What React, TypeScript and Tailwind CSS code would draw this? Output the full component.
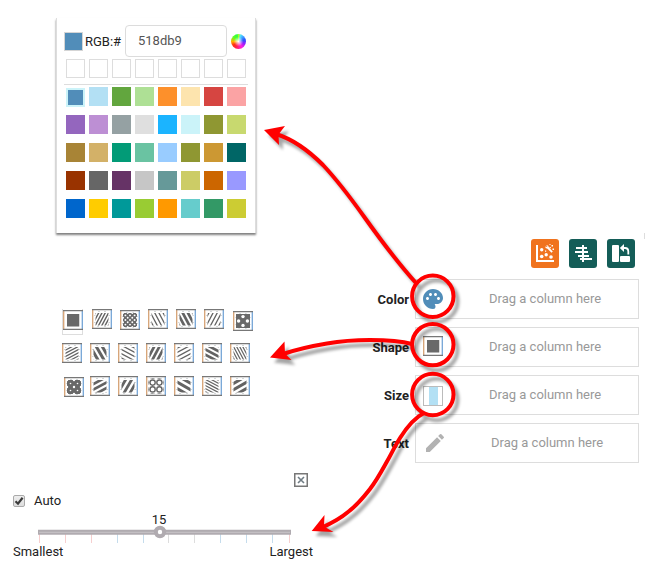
import React from 'react';
import { MdPalette, MdEdit } from 'react-icons/md';

const swatches = [
  ['#518db9', '#b3e0f4', '#62a63e', '#aee095', '#fd902b', '#fde4ae', '#d64541', '#fba3a4'],
  ['#9466be', '#bd8fd4', '#95a1a3', '#dfdfdf', '#1bb4ff', '#cbf3f9', '#8f9732', '#c8d96f'],
  ['#a88436', '#d3b168', '#029b77', '#6ac3a2', '#99ccff', '#8f9732', '#cc9833', '#006666'],
  ['#993300', '#666666', '#663366', '#c6c6c6', '#669999', '#cccc66', '#cc6600', '#9999ff'],
  ['#0066cc', '#ffcc00', '#009999', '#99cc33', '#ff9900', '#66cccc', '#339966', '#cccc33'],
];

type Tile =
  | { kind: 'solid' }
  | { kind: 'lines'; angle: number; width: number; step: number }
  | { kind: 'dots'; radius: number; step: number; ring?: boolean; center?: number; shift?: number };

const lines = (angle: number, width: number, step: number): Tile => ({ kind: 'lines', angle, width, step });

const tileRows: Tile[][] = [
  [
    { kind: 'solid' },
    lines(28, 1.4, 2.9),
    { kind: 'dots', radius: 0.95, step: 4.6, center: 0.95 },
    lines(-28, 1.3, 3.7),
    lines(-28, 2.7, 4.6),
    lines(28, 1.3, 3.7),
    { kind: 'dots', radius: 1.7, step: 8.8, center: 1.7, shift: 4.4 },
  ],
  [
    lines(62, 1.3, 2.8),
    lines(-30, 3, 5.2),
    lines(-62, 1.3, 3.7),
    lines(28, 2.7, 4.6),
    lines(62, 1.3, 3.7),
    lines(-62, 2.7, 4.6),
    lines(-28, 1.2, 2.7),
  ],
  [
    { kind: 'dots', radius: 0.8, step: 7, center: 1.2 },
    lines(62, 2.7, 4.9),
    lines(30, 2.8, 5.2),
    { kind: 'dots', radius: 2.6, step: 6.8, ring: true },
    lines(-60, 3, 5.6),
    lines(-62, 1.2, 2.7),
    lines(60, 3, 5.4),
  ],
];

function PatternTile({ tile, id }: { tile: Tile; id: string }) {
  const offsets = [-5, -4, -3, -2, -1, 0, 1, 2, 3, 4, 5];
  const full = tile.kind === 'dots';
  return (
    <svg width="20" height="20" viewBox="0 0 20 20" className="block">
      <defs>
        <clipPath id={id}>
          {full ? <rect x="2.5" y="2.5" width="15" height="15" /> : <rect x="3.5" y="4" width="13" height="12.5" />}
        </clipPath>
      </defs>
      <path d="M.7 0V20" stroke="#d6a274" strokeWidth="1.3" />
      <path d="M19.3 0V20" stroke="#74a5d6" strokeWidth="1.3" />
      <path d="M0 .7H20M0 19.3H20" stroke="#777" strokeWidth="1.3" />
      {tile.kind !== 'solid' && (
        <path d="M2 6.5h1.5M2 13.5h1.5M16.5 6.5H18M16.5 13.5H18M5 17.5h2M12 17.5h2M6 2.5h2M12 2.5h2" stroke="#d5d9da" />
      )}
      <g clipPath={`url(#${id})`}>
        {tile.kind === 'solid' && <rect x="4" y="4" width="12.5" height="13" fill="#696969" />}
        {tile.kind === 'lines' && (
          <g transform={`rotate(${tile.angle} 10 10)`} stroke="#636363" strokeWidth={tile.width}>
            {offsets.map((n) => (
              <path key={n} d={`M${10 + n * tile.step} -5V25`} />
            ))}
          </g>
        )}
        {tile.kind === 'dots' && (
          <g>
            {!tile.ring && <rect x="3" y="3" width="14" height="14" fill="#696969" />}
            {[-2, -1, 0, 1].flatMap((r) =>
              [-2, -1, 0, 1].map((c) => (
                <circle
                  key={`${r}${c}`}
                  cx={10 + (tile.shift ?? 0) + (c + 0.5) * tile.step}
                  cy={10 + (r + 0.5) * tile.step}
                  r={tile.radius}
                  fill={tile.ring ? 'none' : '#fff'}
                  stroke={tile.ring ? '#666' : 'none'}
                  strokeWidth="1.4"
                />
              )),
            )}
            {tile.center &&
              [-1, 0, 1].flatMap((r) =>
                [-1, 0, 1].map((c) => (
                  <circle
                    key={`m${r}${c}`}
                    cx={10 + (tile.shift ?? 0) + c * tile.step}
                    cy={10 + r * tile.step}
                    r={tile.center}
                    fill="#fff"
                  />
                )),
              )}
          </g>
        )}
      </g>
    </svg>
  );
}

function ColorPicker() {
  return (
    <section className="ml-14 h-[215px] w-[200px] border-x border-[#ddd] bg-white px-[7px] pt-[7px] shadow-[0_2px_2px_rgba(0,0,0,0.5)]">
      <div className="flex h-8 items-center">
        <span className="size-[19px] border border-[#d5d5d5] bg-[#518db9]" />
        <span className="ml-[2px] w-10 whitespace-nowrap pt-px text-[13px] text-[#222]">RGB:#</span>
        <span className="flex h-8 w-[102px] items-center rounded border border-[#dcdcdc] pl-3 text-[13px] text-[#555]">
          518db9
        </span>
        <span className="ml-1 size-[15px] rounded-full bg-[radial-gradient(circle,#fff_0%,transparent_45%),conic-gradient(#aaff20_0deg,#50e0ff_20deg,#2850ff_75deg,#9020ff_110deg,#ff20e0_150deg,#ff2050_200deg,#ff3010_235deg,#ffb000_270deg,#60ff20_310deg,#30ff40_345deg,#50ff60_360deg)]" />
      </div>
      <div className="mt-[2px] flex gap-1 border-b border-[#ddd] px-[2px] pb-[6px]">
        {swatches[0].map((c) => (
          <span key={c} className="size-[19px] border border-[#ddd]" />
        ))}
      </div>
      <div className="mt-[2px] flex flex-col gap-[9px] px-[2px]">
        {swatches.map((row, r) => (
          <div key={r} className="flex h-[19px] gap-1">
            {row.map((c, i) => (
              <span
                key={i}
                className={r === 0 && i === 0 ? 'mt-px size-[19px] border-2 border-[#cbf3f9]' : 'size-[19px]'}
                style={{ backgroundColor: c }}
              />
            ))}
          </div>
        ))}
      </div>
    </section>
  );
}

function ShapePicker() {
  return (
    <section className="mt-[76px] ml-[62px] flex flex-col">
      <div className="flex h-[34px] gap-2">
        {tileRows[0].map((t, i) => (
          <div
            key={i}
            className={
              i === 0
                ? 'mr-px h-[26px] w-[21px] border-x border-b border-[#ddd] pt-px'
                : i === 2
                  ? 'pt-px'
                  : i === 6
                    ? 'ml-px pt-[2px]'
                    : ''
            }
          >
            <PatternTile tile={t} id={`a${i}`} />
          </div>
        ))}
      </div>
      <div className="flex h-[33px] gap-2">
        {tileRows[1].map((t, i) => (
          <PatternTile key={i} tile={t} id={`b${i}`} />
        ))}
      </div>
      <div className="flex gap-2">
        {tileRows[2].map((t, i) => (
          <div key={i} className={i === 0 ? '-mr-[2px] ml-[2px] h-5 pt-px' : 'h-5'}>
            <PatternTile tile={t} id={`c${i}`} />
          </div>
        ))}
      </div>
    </section>
  );
}

const ticks = [39, 65, 91, 117, 143, 168, 194, 220, 246, 272, 289];

function SizePicker() {
  return (
    <section className="mt-[77px] ml-[13px] w-[300px] text-[13px] text-[#222]">
      <div className="flex justify-end pr-[5px]">
        <svg width="14" height="14" viewBox="0 0 14 14">
          <rect x=".75" y=".75" width="12.5" height="12.5" fill="none" stroke="#777" strokeWidth="1.5" />
          <path d="M4 4l6 6M10 4l-6 6" stroke="#707c84" strokeWidth="1.6" />
        </svg>
      </div>
      <div className="mt-[7px] flex h-[13px] items-center gap-[9px]">
        <span className="flex size-3 items-center justify-center rounded-[2px] border border-[#aaa] bg-gradient-to-b from-[#eee] to-[#ddd]">
          <svg width="10" height="10" viewBox="0 0 10 10" fill="none">
            <path d="M1.5 5.2L4 7.7L8.6 1.8" stroke="#3b3b3b" strokeWidth="2.2" />
          </svg>
        </span>
        <span>Auto</span>
      </div>
      <div className="mt-[7px] h-[11px] w-[292px] text-center leading-[12px]">15</div>
      <svg width="300" height="20" viewBox="13 525 300 20" className="block">
        {ticks.map((x, i) => (
          <path key={x} d={`M${x + 0.5} 534V543`} stroke={i < 3 || i === 10 ? '#f6cfcf' : i === 5 || i === 6 ? '#ddd' : '#c5dcec'} />
        ))}
        <path d="M38 532.3H291" stroke="#b0abb0" strokeWidth="5" />
        <path d="M39 532.3H290" stroke="#c9c5c9" strokeWidth="1" />
        <circle cx="160" cy="532" r="4.2" fill="#fff" stroke="#b0abb0" strokeWidth="4" />
      </svg>
      <div className="flex h-[14px] items-center justify-between leading-[14px]">
        <span>Smallest</span>
        <span>Largest</span>
      </div>
    </section>
  );
}

function Toolbar() {
  return (
    <div className="flex h-[29px] gap-[10px] pl-[170px]">
      <button className="h-[29px] w-7 rounded-[3px] bg-[#f0731e]">
        <svg width="28" height="29" viewBox="0 0 28 29" fill="#fff">
          <path d="M5 6h2v15h16v2H5z" />
          <circle cx="10.7" cy="10.8" r="1.7" />
          <circle cx="10.7" cy="17.5" r="1.8" />
          <circle cx="15.2" cy="15.8" r="1.7" />
          <circle cx="20" cy="18" r="1.8" />
          <path d="M15 6.500h2l1 2 3.800 3.900-1.300 1.300-4-3.900-2-.8V7.200l1.700 1 .3-.5z" />
          <path d="M20.500 6h1.500v1.500h-1.500zM18.500 8h1.300v1.300h-1.300zM21.500 9.500h1.500V11h-1.500zM18.500 5h1v1h-1zM14 11.500h1.200v1.200H14z" />
        </svg>
      </button>
      <button className="h-[29px] w-7 rounded-[3px] bg-[#145d58]">
        <svg width="28" height="29" viewBox="0 0 28 29" fill="#fff">
          <path d="M13 6h2v17h-2zM7 8h6v2H7zM15 8h3v2h-3zM6 12h7v2H6zM15 12h4v2h-4zM9 16h4v2H9zM15 16h5v2h-5zM11 19h2v2h-2zM15 19h8v2h-8z" />
        </svg>
      </button>
      <button className="h-[29px] w-7 rounded-[3px] bg-[#145d58]">
        <svg width="28" height="29" viewBox="0 0 28 29" fill="#fff">
          <rect x="5" y="6" width="7" height="17" rx="1" />
          <rect x="13" y="17" width="10" height="6" rx="1" />
          <path d="M16 9H18Q21.300 9 21.300 12.500V15.500" fill="none" stroke="#fff" strokeWidth="1.800" />
          <path d="M12.800 9L17 5v8z" />
        </svg>
      </button>
    </div>
  );
}

const fields = [
  { label: 'Color', icon: <MdPalette className="ml-[5px] size-6 text-[#518db9]" /> },
  {
    label: 'Shape',
    icon: (
      <span className="-mt-[3px] ml-[7px]">
        <PatternTile tile={{ kind: 'solid' }} id="field" />
      </span>
    ),
  },
  {
    label: 'Size',
    icon: (
      <span className="mt-[2px] ml-[7px] flex h-5 w-5 justify-center border border-[#bbb] bg-white">
        <span className="h-full w-[9px] bg-[#b3e0f4]" />
      </span>
    ),
  },
  { label: 'Text', icon: <MdEdit className="ml-[7px] size-6 text-[#b2b2b2]" /> },
];

function Fields() {
  return (
    <div className="mt-[11px] flex flex-col gap-2">
      {fields.map((f) => (
        <div key={f.label} className="flex h-10 items-center">
          <span className="w-12 pt-px text-right text-[13px] font-bold text-[#222]">{f.label}</span>
          <div className="ml-[6px] flex h-10 w-[224px] items-center border border-[#ddd]">
            <span className="flex w-[73px] shrink-0">{f.icon}</span>
            <span className={f.label === 'Text' ? 'ml-[2px] text-[13px] text-[#999]' : 'text-[13px] text-[#999]'}>
              Drag a column here
            </span>
          </div>
        </div>
      ))}
    </div>
  );
}

function CalloutShapes() {
  return (
    <>
      <g fill="none" strokeWidth="4">
        <circle cx="432.8" cy="296.3" r="20.7" />
        <circle cx="432.8" cy="344.6" r="20.7" />
        <circle cx="432.8" cy="394.5" r="20.7" />
        <path d="M416 283C397 262 380 239 365 218C350 197 338 181 323 165C309 151 292 139 276 134" />
        <path d="M412 344C401 341 386 340 370 340C355 340 341 341 327 343.500C312 346 298 349 283 354" />
        <path d="M424 413C414 418 407 427 400 438C395 446 391.500 453.500 386.700 462C382 470.500 377 480 370 489C363 498 356 506 348 512C341 518 332 523 321 528" />
      </g>
      <path stroke="none" d="M264 130L285 126L278.500 134.500L279 145Z" />
      <path stroke="none" d="M270 357.500L284.500 341.500L285 353.500L291.500 360Z" />
      <path stroke="none" d="M311.700 531L324.500 515L324 526.500L333.500 532Z" />
    </>
  );
}

function Callouts() {
  return (
    <svg className="pointer-events-none absolute inset-0" width="645" height="582" viewBox="0 0 645 582">
      <defs>
        <filter id="soft" x="-5%" y="-5%" width="110%" height="110%">
          <feGaussianBlur stdDeviation="1.5" />
        </filter>
      </defs>
      <g transform="translate(4 5)" fill="#000" stroke="#000" opacity=".35" filter="url(#soft)">
        <CalloutShapes />
      </g>
      <g fill="#f00" stroke="#f00">
        <CalloutShapes />
      </g>
    </svg>
  );
}

export default function App() {
  return (
    <main className="relative flex h-[582px] w-[645px] overflow-hidden bg-white font-['Roboto',sans-serif]">
      <div className="w-[361px] shrink-0 pt-[18px]">
        <ColorPicker />
        <ShapePicker />
        <SizePicker />
      </div>
      <div className="w-[283px] shrink-0 pt-[239px]">
        <Toolbar />
        <Fields />
      </div>
      <div className="mt-[233px] h-[6px] w-px bg-[#ddd]" />
      <Callouts />
    </main>
  );
}
